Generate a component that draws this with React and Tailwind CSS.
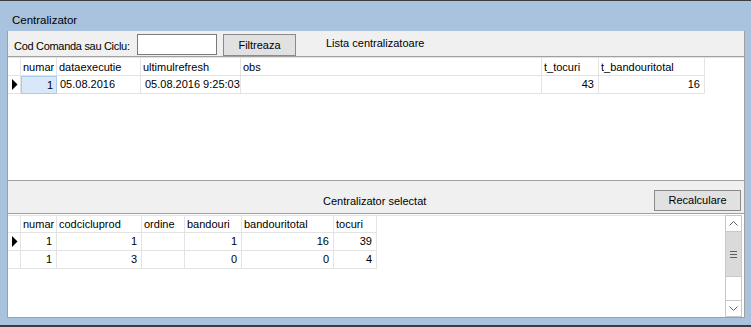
import React from 'react';

const font = { fontFamily: '"Liberation Sans", Arial, sans-serif' };

const topCols = [
  { name: 'numar', w: 'w-[36px]' },
  { name: 'dataexecutie', w: 'w-[84px]' },
  { name: 'ultimulrefresh', w: 'w-[100px]' },
  { name: 'obs', w: 'w-[301px]' },
  { name: 't_tocuri', w: 'w-[57px]' },
  { name: 't_bandouritotal', w: 'w-[106px]' },
];

const bottomCols = [
  { name: 'numar', w: 'w-[36px]' },
  { name: 'codcicluprod', w: 'w-[85px]' },
  { name: 'ordine', w: 'w-[43px]' },
  { name: 'bandouri', w: 'w-[57px]' },
  { name: 'bandouritotal', w: 'w-[92px]' },
  { name: 'tocuri', w: 'w-[43px]' },
];

const bottomRows = [
  ['1', '1', '', '1', '16', '39'],
  ['1', '3', '', '0', '0', '4'],
];

const Arrow = () => (
  <svg width="6" height="11" viewBox="0 0 6 11">
    <polygon points="0,0 5.5,5.5 0,11" fill="#000" />
  </svg>
);

const Indicator = ({ active, h }) => (
  <div className={`w-[13px] ${h} shrink-0 border-r border-b border-[#e3e3e3] flex items-center justify-center pl-[1px]`}>
    {active && <Arrow />}
  </div>
);

const Scrollbar = () => (
  <div className="w-[17px] mt-[1px] mr-[2px] shrink-0 border border-[#c8c8c8] flex flex-col bg-white">
    <div className="h-[16px] border-b border-[#c8c8c8] flex items-center justify-center">
      <svg width="9" height="5" viewBox="0 0 9 5">
        <polyline points="0.5,4.5 4.5,0.5 8.5,4.5" fill="none" stroke="#606060" strokeWidth="1" />
      </svg>
    </div>
    <div className="h-[45px] bg-[#dadada] border-b border-[#c8c8c8] flex flex-col items-center justify-center gap-[2px]">
      <div className="w-[7px] h-[1px] bg-[#606060]" />
      <div className="w-[7px] h-[1px] bg-[#606060]" />
      <div className="w-[7px] h-[1px] bg-[#606060]" />
    </div>
    <div className="flex-1" />
    <div className="h-[16px] border-t border-[#c8c8c8] flex items-center justify-center">
      <svg width="9" height="5" viewBox="0 0 9 5">
        <polyline points="0.5,0.5 4.5,4.5 8.5,0.5" fill="none" stroke="#606060" strokeWidth="1" />
      </svg>
    </div>
  </div>
);

export default function App() {
  return (
    <div
      className="w-[751px] h-[327px] box-border bg-[#a9c2de] border-t border-b-2 border-[#3c3c3c] flex flex-col text-[11px] text-black"
      style={font}
    >
      {/* window title */}
      <div className="h-[30px] shrink-0 pl-[12px] pt-[13px] leading-[13px] text-[11.5px]">Centralizator</div>

      <div className="ml-[7px] w-[738px] h-[287px] shrink-0 box-border border-x border-b border-[#a0a0a0] bg-[#f0f0f0] flex flex-col">
        {/* filter bar */}
        <div className="h-[26px] shrink-0 border-b border-[#a0a0a0] flex items-start pt-[3px] pl-[6px]">
          <div className="w-[123px] mt-[6px] leading-[13px] whitespace-nowrap tracking-[-0.3px]">Cod Comanda sau Ciclu:</div>
          <input className="w-[80px] h-[21px] border border-[#7a7a7a] bg-white outline-none px-1" />
          <button className="ml-[6px] w-[73px] h-[22px] border border-[#8a8a8a] bg-[#e1e1e1] leading-[13px]">Filtreaza</button>
          <div className="ml-[30px] mt-[3px] leading-[13px]">Lista centralizatoare</div>
        </div>

        {/* top grid */}
        <div className="h-[124px] shrink-0 border-b border-[#a0a0a0] bg-white">
          <div className="flex h-[19px] border-t border-[#e3e3e3]">
            <Indicator h="h-[18px]" />
            {topCols.map((c) => (
              <div key={c.name} className={`${c.w} shrink-0 h-[18px] border-r border-b border-[#e3e3e3] pl-[2px] pt-[1px] leading-[16px] whitespace-nowrap overflow-hidden`}>
                {c.name}
              </div>
            ))}
          </div>
          <div className="flex h-[18px]">
            <Indicator active h="h-[18px]" />
            <div className="w-[36px] shrink-0 h-[18px] bg-[#d9e8f8] border border-[#a9cbee] pr-[3px] text-right leading-[16px]">1</div>
            <div className="w-[84px] shrink-0 h-[18px] border-r border-b border-[#e3e3e3] pl-[3px] leading-[17px]">05.08.2016</div>
            <div className="w-[100px] shrink-0 h-[18px] border-r border-b border-[#e3e3e3] pl-[4px] leading-[17px] whitespace-nowrap overflow-hidden">05.08.2016 9:25:03</div>
            <div className="w-[301px] shrink-0 h-[18px] border-r border-b border-[#e3e3e3]" />
            <div className="w-[57px] shrink-0 h-[18px] border-r border-b border-[#e3e3e3] pr-[4px] text-right leading-[17px]">43</div>
            <div className="w-[106px] shrink-0 h-[18px] border-r border-b border-[#e3e3e3] pr-[4px] text-right leading-[17px]">16</div>
          </div>
        </div>

        {/* detail bar */}
        <div className="h-[33px] shrink-0 border-b border-[#a0a0a0] flex items-start">
          <div className="ml-[315px] mt-[14px] leading-[13px]">Centralizator selectat</div>
          <button className="ml-auto mr-[3px] mt-[9px] w-[87px] h-[21px] border border-[#8a8a8a] bg-[#e1e1e1] leading-[13px]">Recalculare</button>
        </div>

        {/* bottom grid */}
        <div className="flex-1 bg-white flex">
          <div className="flex-1 pt-[1px]">
            <div className="flex h-[18px] border-t border-[#e3e3e3]">
              <Indicator h="h-[17px]" />
              {bottomCols.map((c) => (
                <div key={c.name} className={`${c.w} shrink-0 h-[17px] border-r border-b border-[#e3e3e3] pl-[2px] leading-[16px] whitespace-nowrap overflow-hidden`}>
                  {c.name}
                </div>
              ))}
            </div>
            {bottomRows.map((r, i) => (
              <div key={i} className="flex h-[18px]">
                <Indicator active={i === 0} h="h-[18px]" />
                {r.map((v, j) => (
                  <div key={j} className={`${bottomCols[j].w} shrink-0 h-[18px] border-r border-b border-[#e3e3e3] pr-[4px] text-right leading-[17px]`}>
                    {v}
                  </div>
                ))}
              </div>
            ))}
          </div>
          <Scrollbar />
        </div>
      </div>
    </div>
  );
}
